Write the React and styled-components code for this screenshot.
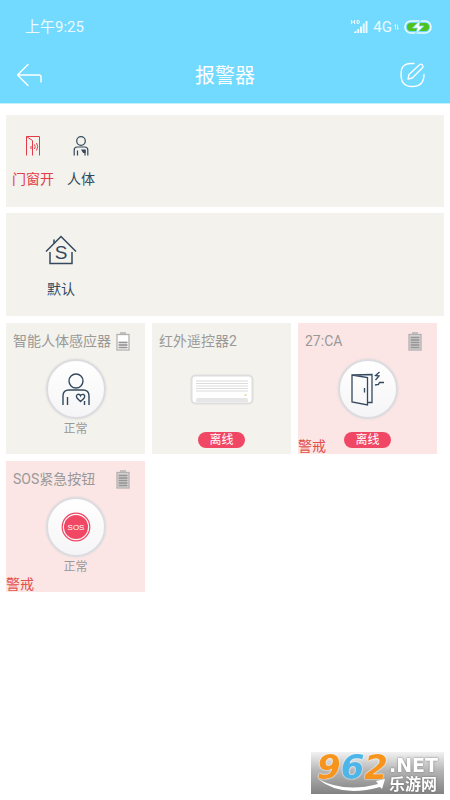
import React from "react";
import styled, { createGlobalStyle } from "styled-components";

const GlobalStyle = createGlobalStyle`
  * {
    box-sizing: border-box;
  }
  body {
    margin: 0;
    background: #fff;
    font-family: Roboto, "Noto Sans CJK SC", sans-serif;
  }
  button {
    margin: 0;
    padding: 0;
    border: 0;
    background: none;
    font: inherit;
    color: inherit;
    cursor: pointer;
  }
`;

const Page = styled.div`
  display: flex;
  flex-direction: column;
  min-height: 100vh;
`;

const Header = styled.header`
  background: #72d9ff;
  border-bottom: 1px solid #c4effd;
  color: #fff;
`;

const StatusBar = styled.div`
  display: flex;
  align-items: center;
  justify-content: space-between;
  height: 47px;
  padding: 6px 18px 0 25px;
  font-size: 15px;
  line-height: 20px;
  color: #ecfaff;
`;

const StatusIcons = styled.div`
  display: flex;
  align-items: center;
  gap: 5px;
`;

const Network = styled.span`
  display: flex;
  align-items: center;
  gap: 2px;
`;

const NavBar = styled.div`
  display: grid;
  grid-template-columns: 35px 1fr 35px;
  align-items: center;
  justify-items: start;
  height: 56px;
  padding: 0 16px;
`;

const Title = styled.h1`
  justify-self: center;
  margin: 0;
  padding-top: 2px;
  font-size: 20px;
  line-height: 28px;
  font-weight: 400;
`;

const Content = styled.main`
  display: flex;
  flex-direction: column;
  gap: 6px;
  padding: 11px 6px;
`;

const Panel = styled.section`
  display: flex;
  padding: ${({ $large }) => ($large ? "21px 31px 16px" : "20px 3px 17px")};
  background: #f3f2ec;
`;

const Filter = styled.button`
  display: flex;
  flex-direction: column;
  align-items: center;
  gap: ${({ $large }) => ($large ? "12px" : "11px")};
  width: 48px;
  font-size: 14px;
  line-height: 22px;
  color: ${({ $active }) => ($active ? "#e33b48" : "#34495e")};
`;

const Devices = styled.section`
  display: grid;
  grid-template-columns: repeat(3, 1fr);
  gap: 7px;
  padding: 1px 7px 0 0;
`;

const Card = styled.article`
  position: relative;
  display: flex;
  flex-direction: column;
  align-items: center;
  height: 131px;
  background: ${({ $alert }) => ($alert ? "#fbe6e5" : "#f3f2ec")};
`;

const CardHead = styled.div`
  display: flex;
  align-items: center;
  justify-content: space-between;
  width: 100%;
  height: 36px;
  padding: 0 15px 0 7px;
  color: #999;
`;

const Name = styled.h2`
  margin: 0;
  font-size: 14px;
  line-height: 20px;
  font-weight: 400;
  white-space: nowrap;
`;

const Disc = styled.button`
  display: flex;
  align-items: center;
  justify-content: center;
  width: 60px;
  height: 60px;
  ${({ $plain }) =>
    !$plain &&
    `
    border: 2px solid #dcdce0;
    border-radius: 50%;
    background: linear-gradient(#fff, #f5f5f7);
    box-shadow: 0 0 2px #d4d2d4;
    color: #34495e;
  `}
`;

const State = styled.span`
  margin-top: 1px;
  font-size: 12px;
  line-height: 18px;
  color: #999;
`;

const Badge = styled.span`
  width: 47px;
  margin-top: 13px;
  border-radius: 8px;
  background: #f04864;
  color: #fff;
  font-size: 12px;
  line-height: 16px;
  text-align: center;
`;

const Guard = styled.span`
  position: absolute;
  left: 0;
  bottom: 0;
  font-size: 14px;
  line-height: 16px;
  color: #e2504d;
`;

const Watermark = styled.div`
  position: fixed;
  right: 6px;
  bottom: 6px;
  display: flex;
  width: 133px;
  height: 42px;
  padding-left: 6px;
  background: linear-gradient(#f2f2f2, #b5b5b5 45%, #828282);
  font-family: "DejaVu Sans", "Noto Sans CJK SC", sans-serif;
  font-weight: 700;
  color: #fff;
`;

const Digits = styled.div`
  width: 72px;
  font-size: 34px;
  line-height: 30px;
  font-style: italic;
  color: #f7941e;
  text-shadow: 0 0 2px #fff, 0 0 1px #fff;

  b {
    color: #4db5e8;
  }
`;

const Site = styled.div`
  display: flex;
  flex-direction: column;
  font-size: 19px;
  line-height: 26px;
  text-shadow: 0 0 2px #666;

  small {
    font-size: 16px;
    line-height: 14px;
    white-space: nowrap;
  }
`;

const Icon = styled.svg`
  display: block;
  flex-shrink: 0;
  fill: none;
  stroke: ${({ $color }) => $color || "currentColor"};

  text {
    stroke: none;
  }
`;

const Swoosh = styled(Icon)`
  position: absolute;
  left: 6px;
  bottom: 0;
`;

const Signal = () => (
  <Icon width="17" height="15" viewBox="0 0 17 15">
    <path d="M.5 1v4M3.500 1v4M.5 3h3M6 1.500v3h1.200q1.300 0 1.300-1.500T7.200 1.500z" />
    <path
      d="M3 14v-1l2.500-1.500V14zM6.300 14v-4h2v4zM9 14V7.500h2V14zM11.700 14V4.500h2V14zM14.500 14V2h2v12z"
      fill="currentColor"
      stroke="none"
    />
  </Icon>
);

const Arrows = () => (
  <Icon width="5" height="6" viewBox="0 0 5 6" strokeWidth=".8">
    <path d="M1.500 5.500v-5L.3 2M3.500.5v5L4.700 4" />
  </Icon>
);

const Charging = () => (
  <Icon width="28" height="14" viewBox="0 0 28 14">
    <rect x="1" y="1" width="26" height="12" rx="6" strokeWidth="1.600" />
    <rect x="3" y="3" width="22" height="8" rx="4" fill="#4fc319" stroke="none" />
    <path
      d="M16.500 0 8.500 8h5l-2 6 8.500-8h-5z"
      fill="#fff"
      stroke="#72d9ff"
      strokeWidth=".8"
    />
  </Icon>
);

const BackIcon = () => (
  <Icon width="27" height="24" viewBox="0 0 27 24" strokeWidth="1.400">
    <path
      d="M12 1.500 1.500 12 12 22.500M1.500 12H23q2 0 2 2v5"
      strokeLinecap="round"
      strokeLinejoin="round"
    />
  </Icon>
);

const EditIcon = () => (
  <Icon width="27" height="26" viewBox="0 0 27 26" strokeWidth="1.300">
    <g strokeLinecap="round" strokeLinejoin="round">
      <path d="M15 1.500h-3C5 1.500 2 5 2 12.500S5 24.500 13 24.500 25 21 25 12.500" />
      <path d="m9 17 1-4.500L20.500 2.700q1.300-1.200 2.600 0l.4.400q1.300 1.400 0 2.700L13.300 16z" />
    </g>
  </Icon>
);

const DoorOpenIcon = () => (
  <Icon width="16" height="22" viewBox="0 0 16 22">
    <path d="M1.500 20.500v-19h13v19M1.500 1.500l6 4v15M9.500 9.500q1.500 2 0 4.500M11.500 8q2.500 3.500 0 7.500M6 11v3" />
  </Icon>
);

const BodyIcon = () => (
  <Icon width="16" height="22" viewBox="0 0 16 22" strokeWidth="1.200">
    <circle cx="8" cy="6" r="4.300" />
    <path d="M1.200 20.500v-5.500q0-3 3-3h7.600q3 0 3 3v5.500M4.500 15.500v5M12 15v5.500" />
    <path d="M9 15h3v2.500h-1.500z" fill="currentColor" />
  </Icon>
);

const HomeIcon = () => (
  <Icon width="32" height="32" viewBox="0 0 32 32" strokeWidth="1.500">
    <path d="M1 17.500 16 2.500l15 15M5 18v11.500h22V18M9 9.500v-4" />
    <text
      x="16"
      y="25"
      textAnchor="middle"
      fontSize="19"
      fontFamily="Liberation Sans, sans-serif"
      fill="currentColor"
    >
      S
    </text>
  </Icon>
);

const Battery = ({ level }) => (
  <Icon width="14" height="19" viewBox="0 0 14 19" $color="#b3b1b0">
    <path d="M4 1h6" strokeWidth="1.500" />
    <rect
      x="1"
      y="2.500"
      width="12"
      height="15.500"
      strokeWidth="1.300"
      fill={level < 5 ? "#fff" : "#dcd8d8"}
    />
    {[15.5, 13, 10.5, 8, 5.5].slice(0, level).map((y) => (
      <path key={y} d={`M2.500 ${y}h9`} stroke="#969595" strokeWidth="1.700" />
    ))}
  </Icon>
);

const PersonIcon = () => (
  <Icon width="30" height="34" viewBox="0 0 30 34" strokeWidth="1.400">
    <circle cx="15" cy="9" r="7" />
    <path d="M2 33v-9q0-6 6-6h14q6 0 6 6v9M6.500 25v8M23.500 29v4" />
    <path d="M19.500 29.500 16 26q-1.500-3 1-3.700 1.700-.3 2.500 1.500.8-1.800 2.800-1.300 2.400.8.700 3.800z" />
  </Icon>
);

const DoorIcon = () => (
  <Icon width="34" height="36" viewBox="0 0 34 36" strokeWidth="1.300">
    <path d="M1 4l15.500 2.500V34L1 31zM1 4l20-.5v28h-4M13.500 17v4.500" />
    <path d="M28.500 1l-4 3.500 3.500.5-3.500 4M24 14l3.500-.7 1-1.800H33" />
  </Icon>
);

const SosIcon = () => (
  <Icon width="30" height="30" viewBox="0 0 30 30" $color="#f04864">
    <circle cx="15" cy="15" r="13.800" strokeWidth="1.200" />
    <circle cx="15" cy="15" r="12" fill="#f04864" stroke="none" />
    <text
      x="15"
      y="18"
      textAnchor="middle"
      fontSize="8"
      fontFamily="Liberation Sans, sans-serif"
      fill="#fff"
    >
      SOS
    </text>
  </Icon>
);

const AirConIcon = () => (
  <Icon width="64" height="31" viewBox="0 0 64 31">
    <rect x="1.500" y="1.500" width="61" height="28" rx="4" fill="#fff" stroke="#dededf" strokeWidth="2" />
    <path
      d="M6 7h52M6 9.500h52M6 12h52M6 14.500h52M6 17h52"
      stroke="#dcdcdc"
      strokeWidth="1.200"
    />
    <path d="M6 28v-2q0-2 2-2h48q2 0 2 2v2z" fill="#e6e6e6" stroke="none" />
    <path d="M54.500 21h2" stroke="#f2ad55" />
  </Icon>
);

const devices = [
  { name: "智能人体感应器", icon: PersonIcon, battery: 3, state: "正常" },
  { name: "红外遥控器2", icon: AirConIcon, plain: true, offline: true },
  { name: "27:CA", icon: DoorIcon, battery: 5, offline: true, alert: true },
  { name: "SOS紧急按钮", icon: SosIcon, battery: 5, state: "正常", alert: true },
];

const Device = ({ name, icon: Picture, battery, state, plain, offline, alert }) => (
  <Card $alert={alert}>
    <CardHead>
      <Name>{name}</Name>
      {battery && <Battery level={battery} />}
    </CardHead>
    <Disc $plain={plain} aria-label={name}>
      <Picture />
    </Disc>
    {offline ? <Badge>离线</Badge> : <State>{state}</State>}
    {alert && <Guard>警戒</Guard>}
  </Card>
);

const App = () => {
  return (
    <Page>
      <GlobalStyle />
      <Header>
        <StatusBar>
          <span>上午9:25</span>
          <StatusIcons>
            <Signal />
            <Network>
              4G
              <Arrows />
            </Network>
            <Charging />
          </StatusIcons>
        </StatusBar>
        <NavBar>
          <button aria-label="返回">
            <BackIcon />
          </button>
          <Title>报警器</Title>
          <button aria-label="编辑">
            <EditIcon />
          </button>
        </NavBar>
      </Header>
      <Content>
        <Panel>
          <Filter $active>
            <DoorOpenIcon />
            门窗开
          </Filter>
          <Filter>
            <BodyIcon />
            人体
          </Filter>
        </Panel>
        <Panel $large>
          <Filter $large>
            <HomeIcon />
            默认
          </Filter>
        </Panel>
        <Devices>
          {devices.map((device) => (
            <Device key={device.name} {...device} />
          ))}
        </Devices>
      </Content>
      <Watermark>
        <Swoosh width="70" height="16" viewBox="0 0 70 16">
          <path
            d="M1 1q26 14 60 5l-2-3 9-2-3 10-2-2Q24 20 1 1z"
            fill="#fff"
            stroke="none"
          />
        </Swoosh>
        <Digits>
          9<b>6</b>2
        </Digits>
        <Site>
          .NET
          <small>乐游网</small>
        </Site>
      </Watermark>
    </Page>
  );
};

export default App;
